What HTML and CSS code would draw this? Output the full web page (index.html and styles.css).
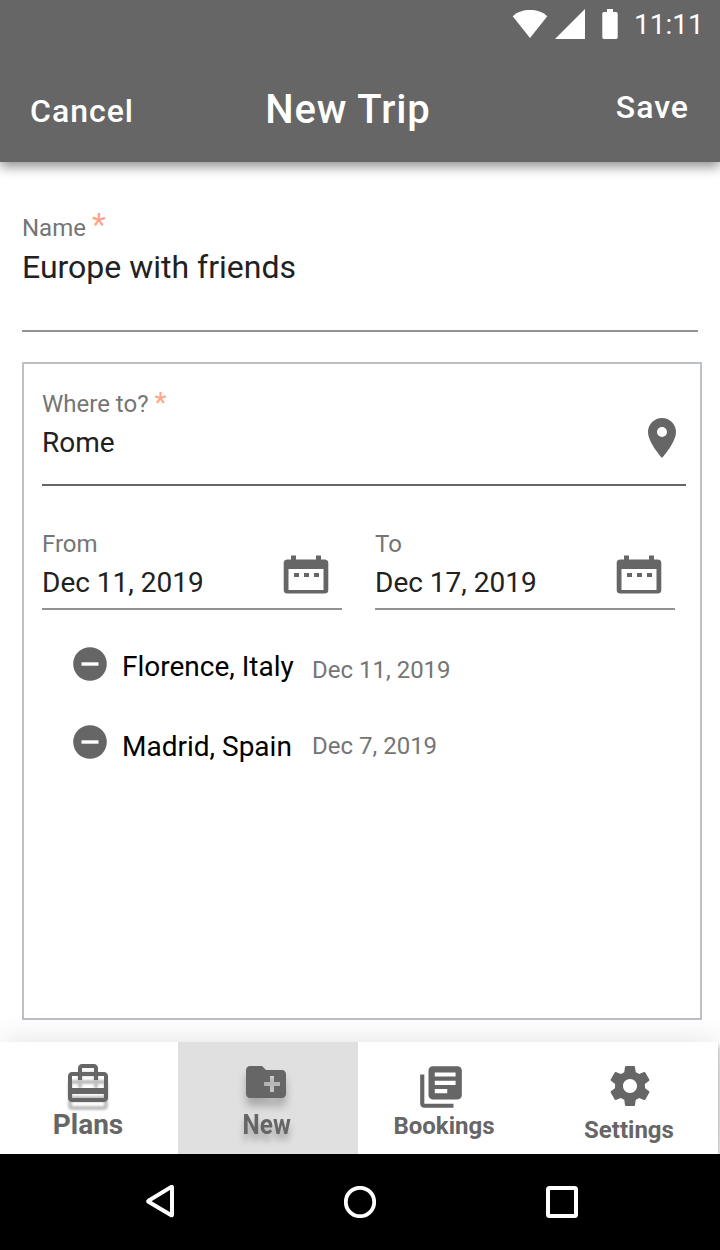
FILE: index.html
```html
<!DOCTYPE html>
<html lang="en">
<head>
<meta charset="utf-8">
<title>New Trip</title>
<link rel="stylesheet" href="styles.css">
</head>
<body>
<div class="screen">
  <header class="header">
    <div class="status">
      <svg class="status-wifi" width="36" height="30" viewBox="0 0 36 30"><path d="M.7 7.2C5.5 2.8 11.5 1 18 1s12.500 1.800 17.300 6.200L18 29z" fill="#fff"/></svg>
      <svg class="status-signal" width="30" height="30" viewBox="0 0 30 30"><path d="M30 0v30H0z" fill="#fff"/></svg>
      <svg class="status-battery" width="16" height="30" viewBox="0 0 16 30"><path d="M5 0h6v3h3q1.700 0 1.700 1.700v23.600q0 1.700-1.700 1.700H2Q.3 30 .3 28.300V4.700Q.3 3 2 3h3z" fill="#fff"/></svg>
      <span class="clock">11:11</span>
    </div>
    <nav class="toolbar">
      <span class="cancel">Cancel</span>
      <h1 class="title">New Trip</h1>
      <span class="save">Save</span>
    </nav>
  </header>

  <main class="main">
    <div class="field field-name">
      <div class="label">Name <span class="star star-large">*</span></div>
      <div class="value value-large">Europe with friends</div>
    </div>

    <section class="card">
      <div class="field field-where">
        <div class="field-text">
          <div class="label">Where to? <span class="star">*</span></div>
          <div class="value">Rome</div>
        </div>
        <svg class="pin" width="48" height="48" viewBox="0 0 24 24"><path fill="#666" d="M12 2C8.130 2 5 5.130 5 9c0 5.250 7 13 7 13s7-7.750 7-13c0-3.870-3.130-7-7-7zm0 9.500a2.500 2.500 0 0 1 0-5 2.500 2.500 0 0 1 0 5z"/></svg>
      </div>

      <div class="dates">
        <div class="field field-date">
          <div class="field-text">
            <div class="label">From</div>
            <div class="value">Dec 11, 2019</div>
          </div>
          <svg class="calendar" width="46" height="40" viewBox="0 0 46 40"><path fill="#666" fill-rule="evenodd" d="M8 .5h5v4h20v-4h5v4h3.500q3.800 0 3.800 3.500v27q0 3.500-3.800 3.500h-37Q.7 38.500.7 35V8q0-3.500 3.800-3.500H8zM5.500 14v21h35V14zM11 18h5v4h-5zM21 18h5v4h-5zM31 18h5v4h-5z"/></svg>
        </div>
        <div class="field field-date">
          <div class="field-text">
            <div class="label">To</div>
            <div class="value">Dec 17, 2019</div>
          </div>
          <svg class="calendar" width="46" height="40" viewBox="0 0 46 40"><path fill="#666" fill-rule="evenodd" d="M8 .5h5v4h20v-4h5v4h3.500q3.800 0 3.800 3.500v27q0 3.500-3.800 3.500h-37Q.7 38.500.7 35V8q0-3.500 3.800-3.500H8zM5.500 14v21h35V14zM11 18h5v4h-5zM21 18h5v4h-5zM31 18h5v4h-5z"/></svg>
        </div>
      </div>

      <ul class="stops">
        <li class="stop stop-first">
          <svg width="40" height="40" viewBox="0 0 40 40"><circle cx="20" cy="20" r="16.800" fill="#666"/><path d="M11.500 18.300h17v3.400h-17z" fill="#fff"/></svg>
          <span class="place">Florence, Italy</span>
          <span class="when">Dec 11, 2019</span>
        </li>
        <li class="stop stop-second">
          <svg width="40" height="40" viewBox="0 0 40 40"><circle cx="20" cy="20" r="16.800" fill="#666"/><path d="M11.500 18.300h17v3.400h-17z" fill="#fff"/></svg>
          <span class="place">Madrid, Spain</span>
          <span class="when">Dec 7, 2019</span>
        </li>
      </ul>
    </section>
  </main>

  <nav class="tabs">
    <div class="tab tab-plans">
      <svg class="tab-icon icon-hard-shadow" width="48" height="48" viewBox="0 0 24 24"><path fill="#666" d="M17 6V4c0-1.110-.89-2-2-2H9c-1.110 0-2 .89-2 2v2H4c-1.110 0-2 .89-2 2v11c0 1.110.89 2 2 2h16c1.110 0 2-.89 2-2V8c0-1.110-.89-2-2-2h-3zM9 4h6v2H9V4zm11 15H4v-2h16v2zm0-5H4V8h3v2h2V8h6v2h2V8h3v6z"/></svg>
      <span>Plans</span>
    </div>
    <div class="tab tab-new">
      <svg class="tab-icon icon-soft-shadow" width="48" height="48" viewBox="0 0 24 24"><path fill="#666" d="M20 6h-8l-2-2H4c-1.110 0-1.990.89-1.990 2L2 18c0 1.110.89 2 2 2h16c1.110 0 2-.89 2-2V8c0-1.110-.89-2-2-2zm-1 8h-3v3h-2v-3h-3v-2h3V9h2v3h3v2z"/></svg>
      <span>New</span>
    </div>
    <div class="tab tab-bookings">
      <svg class="tab-icon" width="50" height="50" viewBox="0 0 24 24"><path fill="#666" d="M4 6H2v14c0 1.100.9 2 2 2h14v-2H4V6zm16-4H8c-1.100 0-2 .9-2 2v12c0 1.100.9 2 2 2h12c1.100 0 2-.9 2-2V4c0-1.100-.9-2-2-2zm-1 9H9V9h10v2zm-4 4H9v-2h6v2zm4-8H9V5h10v2z"/></svg>
      <span>Bookings</span>
    </div>
    <div class="tab tab-settings">
      <svg class="tab-icon" width="48" height="48" viewBox="0 0 24 24"><path fill="#666" d="M19.430 12.980c.04-.32.07-.64.07-.98s-.03-.66-.07-.98l2.110-1.650c.19-.15.240-.42.120-.64l-2-3.460c-.12-.22-.39-.3-.61-.22l-2.490 1c-.52-.4-1.080-.73-1.690-.98l-.38-2.650C14.460 2.180 14.250 2 14 2h-4c-.25 0-.46.180-.49.420l-.38 2.650c-.61.250-1.170.590-1.690.98l-2.490-1c-.23-.09-.49 0-.61.220l-2 3.460c-.13.220-.07.490.120.640l2.110 1.650c-.04.320-.07.650-.07.980s.03.660.07.980l-2.110 1.650c-.19.150-.24.420-.12.640l2 3.460c.12.220.39.300.61.220l2.490-1c.52.400 1.080.730 1.690.980l.38 2.650c.03.240.24.420.49.420h4c.25 0 .46-.18.490-.42l.38-2.650c.61-.25 1.170-.59 1.690-.98l2.490 1c.23.090.49 0 .61-.22l2-3.460c.12-.22.070-.49-.12-.64l-2.110-1.650zM12 15.500c-1.930 0-3.500-1.570-3.500-3.500s1.570-3.500 3.500-3.500 3.500 1.570 3.500 3.500-1.570 3.500-3.500 3.500z"/></svg>
      <span>Settings</span>
    </div>
  </nav>

  <footer class="system-nav">
    <svg width="32" height="34" viewBox="0 0 32 34"><path d="M28 2.200v27.600q0 .7-.7.500L4.500 16.800q-.7-.5 0-1L27.300 1.900q.7-.3.700.3z" fill="none" stroke="#fff" stroke-width="4" stroke-linejoin="round"/></svg>
    <svg class="home" width="32" height="32" viewBox="0 0 32 32"><circle cx="16" cy="16" r="14.200" fill="none" stroke="#fff" stroke-width="3.800"/></svg>
    <svg width="32" height="32" viewBox="0 0 32 32"><rect x="2" y="2" width="28" height="28" rx="1.500" fill="none" stroke="#fff" stroke-width="4"/></svg>
  </footer>
</div>
</body>
</html>
```
FILE: styles.css
```css
* { box-sizing: border-box; }
body { margin: 0; background: #fff; font-family: Roboto, "Liberation Sans", sans-serif; }
svg { display: block; flex: none; }
.screen { width: 720px; height: 1250px; display: flex; flex-direction: column; overflow: hidden; }

.header { flex: none; height: 162px; background: #666; color: #fff; box-shadow: 0 5px 11px rgba(0, 0, 0, .42); }
.status { height: 48px; display: flex; align-items: flex-start; justify-content: flex-end; padding: 9px 16px 0 0; }
.status-wifi { margin-right: 7px; }
.status-signal { margin-right: 17px; }
.status-battery { margin-right: 16px; }
.clock { width: 70px; font-size: 28px; line-height: 32px; }
.toolbar { height: 114px; display: grid; grid-template-columns: 1fr auto 1fr; align-items: start; padding: 0 31px 0 30px; font-size: 32px; line-height: 40px; font-weight: 500; letter-spacing: 1px; }
.cancel { margin-top: 43px; }
.title { margin: 38px 23px 0 0; font-size: 40px; line-height: 48px; font-weight: 500; letter-spacing: .9px; }
.save { margin-top: 39px; justify-self: end; }

.main { flex: none; height: 880px; padding: 52px 18px 0 22px; }
.label { height: 28px; font-size: 24px; line-height: 28px; color: #757575; white-space: nowrap; }
.star { color: #ffa389; font-size: 28px; line-height: 0; }
.star-large { font-size: 32px; vertical-align: 1px; }
.value { font-size: 28px; line-height: 32px; color: #212121; margin-top: 9px; }
.field { border-bottom: 2px solid #929292; }
.field-name { width: 676px; padding-bottom: 43px; }
.value-large { font-size: 32px; line-height: 40px; margin-top: 5px; }

.card { width: 680px; height: 658px; margin-top: 30px; border: 2px solid #bdc1c5; padding: 26px 14px 0 18px; }
.field-where { display: flex; justify-content: space-between; padding-bottom: 25px; border-color: #666; }
.pin { margin: 24px 0 -4px; }
.dates { display: flex; gap: 33px; margin-top: 44px; }
.field-date { width: 300px; display: flex; justify-content: space-between; padding: 0 13px 9px 0; }
.calendar { margin-top: 25px; }
.stops { list-style: none; margin: 34px 0 0; padding: 0 0 0 28px; display: flex; flex-direction: column; gap: 38px; }
.stop { display: flex; align-items: flex-start; height: 40px; white-space: nowrap; }
.place { width: 190px; margin-left: 12px; font-size: 28px; line-height: 32px; color: #000; }
.when { font-size: 24px; line-height: 28px; color: #757575; }
.stop-first .place { padding-top: 7px; }
.stop-first .when { padding-top: 12px; }
.stop-second .place { padding-top: 9px; }
.stop-second .when { padding-top: 10px; }

.tabs { flex: none; width: 718px; height: 112px; display: flex; background: #fff; color: #666; box-shadow: 0 0 30px rgba(0, 0, 0, .12), 2px 4px 4px rgba(0, 0, 0, .2); font-weight: 700; }
.tab { display: flex; flex-direction: column; align-items: center; width: 180px; }
.tab-plans { width: 178px; padding: 18px 2px 0 0; font-size: 28px; line-height: 32px; }
.tab-plans span { margin-top: 1px; }
.tab-new { background: #e0e0e0; padding: 16px 4px 0 0; font-size: 28px; line-height: 32px; }
.tab-new span { margin: 3px 0 0 2px; transform: scaleX(.87); text-shadow: 0 7px 7px rgba(0, 0, 0, .25); }
.tab-bookings { padding: 20px 8px 0 0; font-size: 24px; line-height: 28px; }
.tab-bookings .tab-icon { margin-right: 6px; }
.tab-settings { padding: 20px 0 0 2px; font-size: 24px; line-height: 28px; }
.tab-settings .tab-icon { margin-left: 2px; }
.tab-settings span { margin-top: 6px; }
.icon-hard-shadow { filter: drop-shadow(0 8px 1px rgba(0, 0, 0, .25)); }
.icon-soft-shadow { filter: drop-shadow(0 8px 4px rgba(0, 0, 0, .25)); }

.system-nav { position: relative; flex: none; height: 96px; display: flex; align-items: center; justify-content: space-between; background: #000; padding: 0 142px 0 144px; }
.home { margin-right: 2px; }
```
